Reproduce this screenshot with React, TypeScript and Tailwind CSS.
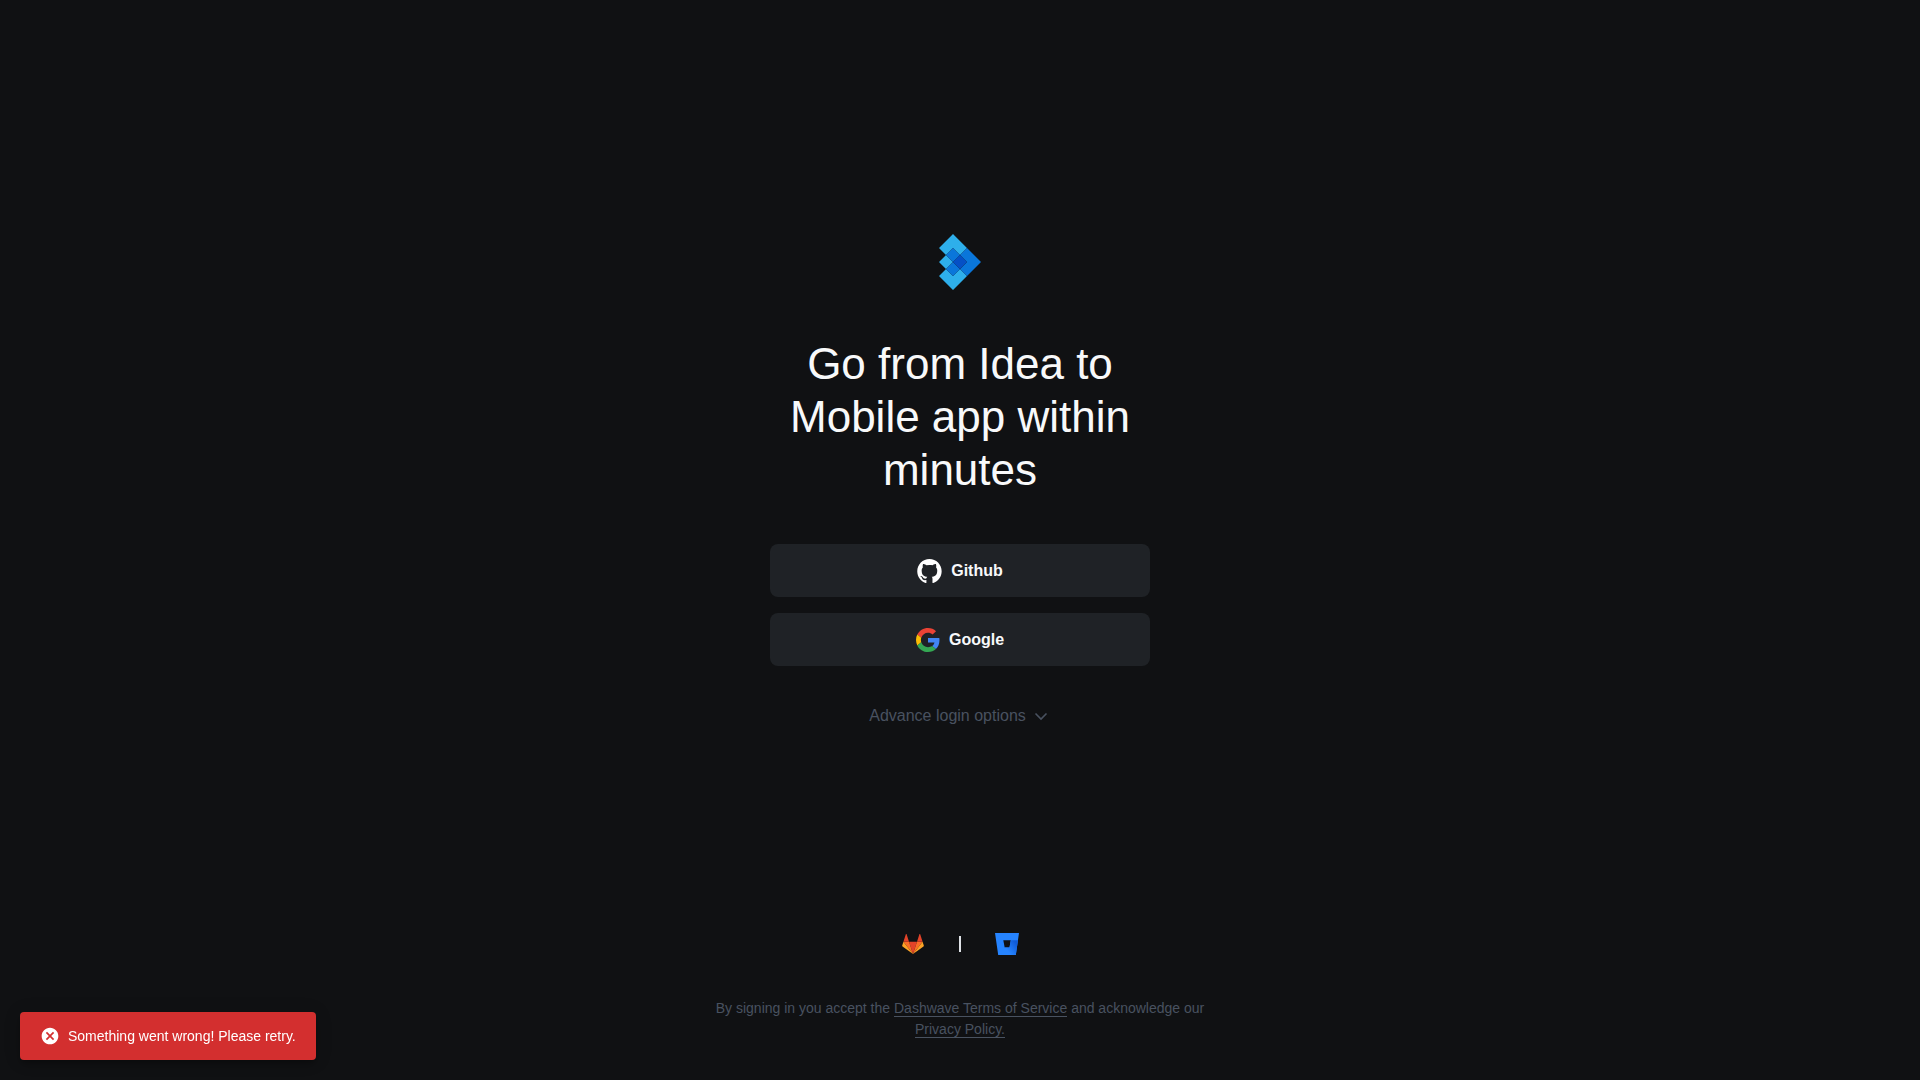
const loginOptions = [
  { name: "Github", Icon: GithubIcon },
  { name: "Google", Icon: GoogleIcon },
]

function DashwaveLogo() {
  return (
    <svg width="42" height="56" viewBox="0 0 6 8" aria-label="Dashwave">
      <path fill="#2eafeb" d="M2 0l2 2-1 1-1-1-1 1-1-1zM0 4l1-1 1 1-1 1zM2 8l2-2-1-1-1 1-1-1-1 1z" />
      <path fill="#0a76da" d="M2 2l1 1-1 1-1-1zM2 4l1 1-1 1-1-1zM4 2l2 2-2 2-1-1 1-1-1-1z" />
      <path fill="#0550c6" d="M3 3l1 1-1 1-1-1z" />
    </svg>
  )
}

function GithubIcon() {
  return (
    <svg width="25" height="24" viewBox="0 0 98 96" aria-hidden="true">
      <path
        fill="#fff"
        d="M48.854 0C21.839 0 0 22 0 49.217c0 21.756 13.993 40.172 33.405 46.69 2.427.49 3.316-1.059 3.316-2.362 0-1.141-.08-5.052-.08-9.127-13.59 2.934-16.42-5.867-16.42-5.867-2.184-5.704-5.42-7.17-5.42-7.17-4.448-3.015.324-3.015.324-3.015 4.934.326 7.523 5.052 7.523 5.052 4.367 7.496 11.404 5.378 14.235 4.074.404-3.178 1.699-5.378 3.074-6.6-10.839-1.141-22.243-5.378-22.243-24.283 0-5.378 1.94-9.778 5.014-13.2-.485-1.222-2.184-6.275.486-13.038 0 0 4.125-1.304 13.426 5.052a46.97 46.97 0 0 1 12.214-1.63c4.125 0 8.33.571 12.213 1.63 9.302-6.356 13.427-5.052 13.427-5.052 2.67 6.763.97 11.816.485 13.038 3.155 3.422 5.015 7.822 5.015 13.2 0 18.905-11.404 23.06-22.324 24.283 1.78 1.548 3.316 4.481 3.316 9.126 0 6.6-.08 11.897-.08 13.526 0 1.304.89 2.853 3.316 2.364 19.412-6.52 33.405-24.935 33.405-46.691C97.707 22 75.788 0 48.854 0z"
      />
    </svg>
  )
}

function GoogleIcon() {
  return (
    <svg width="24" height="24" viewBox="0 0 48 48" aria-hidden="true">
      <path fill="#EA4335" d="M24 9.5c3.54 0 6.71 1.22 9.21 3.6l6.85-6.85C35.9 2.38 30.47 0 24 0 14.62 0 6.51 5.38 2.56 13.22l7.98 6.19C12.43 13.72 17.74 9.5 24 9.5z" />
      <path fill="#4285F4" d="M46.98 24.55c0-1.57-.15-3.09-.38-4.55H24v9.02h12.94c-.58 2.96-2.26 5.48-4.78 7.18l7.73 6c4.51-4.18 7.09-10.36 7.09-17.65z" />
      <path fill="#FBBC05" d="M10.53 28.59c-.48-1.45-.76-2.99-.76-4.59s.27-3.14.76-4.59l-7.98-6.19C.92 16.46 0 20.12 0 24c0 3.88.92 7.54 2.56 10.78l7.97-6.19z" />
      <path fill="#34A853" d="M24 48c6.48 0 11.93-2.13 15.89-5.81l-7.73-6c-2.15 1.45-4.92 2.3-8.16 2.3-6.26 0-11.57-4.22-13.47-9.91l-7.98 6.19C6.51 42.62 14.62 48 24 48z" />
    </svg>
  )
}

function GitlabIcon() {
  return (
    <svg width="24" height="20" viewBox="0 0 256 236" aria-hidden="true">
      <path fill="#E24329" d="M128.075 236.075l47.104-144.97H80.97l47.104 144.97z" />
      <path fill="#FC6D26" d="M128.075 236.074L80.97 91.104H14.956l113.119 144.97z" />
      <path fill="#FCA326" d="M14.956 91.104L.642 135.16a9.752 9.752 0 0 0 3.542 10.903l123.891 90.012-113.12-144.97z" />
      <path fill="#E24329" d="M14.956 91.105H80.97L52.601 3.79c-1.46-4.493-7.816-4.492-9.275 0l-28.37 87.315z" />
      <path fill="#FC6D26" d="M128.075 236.074l47.104-144.97h66.015l-113.12 144.97z" />
      <path fill="#FCA326" d="M241.194 91.104l14.314 44.056a9.752 9.752 0 0 1-3.543 10.903l-123.89 90.012 113.119-144.97z" />
      <path fill="#E24329" d="M241.194 91.105h-66.015l28.37-87.315c1.46-4.493 7.816-4.492 9.275 0l28.37 87.315z" />
    </svg>
  )
}

function BitbucketIcon() {
  return (
    <svg width="24" height="22" viewBox="0 0 24 22" aria-hidden="true">
      <defs>
        <linearGradient id="bitbucket" x1="23" y1="8" x2="12" y2="17" gradientUnits="userSpaceOnUse">
          <stop offset="0.18" stopColor="#0F5BD8" />
          <stop offset="1" stopColor="#2684FF" />
        </linearGradient>
      </defs>
      <path fill="#2684FF" fillRule="evenodd" d="M0 0h24l-3.200 22H3.200zM8.300 7.200l1.400 7.400h4.800l1.300-7.400z" />
      <path fill="url(#bitbucket)" d="M22.950 7.200H15.800l-1.300 7.400H9.700L3.500 22h17.300z" />
    </svg>
  )
}

function ErrorToast({ message }: { message: string }) {
  return (
    <div
      role="alert"
      className="fixed bottom-5 left-5 flex h-12 items-center gap-2 rounded bg-[#d32f2f] px-5 text-sm text-white shadow-[0_3px_5px_-1px_rgba(0,0,0,0.2),0_6px_10px_0_rgba(0,0,0,0.14),0_1px_18px_0_rgba(0,0,0,0.12)]"
    >
      <svg width="20" height="20" viewBox="0 0 24 24" fill="currentColor" aria-hidden="true">
        <path
          fillRule="evenodd"
          d="M12 2C6.470 2 2 6.470 2 12s4.470 10 10 10 10-4.470 10-10S17.530 2 12 2zM15.590 7L12 10.590L8.410 7L7 8.410L10.590 12L7 15.590L8.410 17L12 13.410L15.590 17L17 15.590L13.410 12L17 8.410z"
        />
      </svg>
      {message}
    </div>
  )
}

export default function App() {
  return (
    <div className="flex min-h-screen flex-col bg-[#101113] font-['Liberation_Sans',Arial,sans-serif]">
      <main className="flex flex-1 flex-col items-center justify-center pt-[29px]">
        <DashwaveLogo />

        <h1 className="mt-[47px] w-full max-w-[380px] text-center text-[44px] leading-[53px] text-[#f8f9fa]">
          Go from Idea to Mobile app within minutes
        </h1>

        <div className="mt-12 flex w-full max-w-[380px] flex-col gap-4">
          {loginOptions.map(({ name, Icon }) => (
            <button
              key={name}
              type="button"
              className="flex h-[53px] items-center justify-center gap-[9px] rounded-lg bg-[#1f2226] font-bold text-[#f8f9fa]"
            >
              <Icon />
              {name}
            </button>
          ))}
        </div>

        <button type="button" className="mt-[38px] flex h-6 items-center gap-2 text-[#495260]">
          Advance login options
          <svg width="17" height="18" viewBox="0 0 17 18" fill="none" stroke="currentColor" strokeWidth="1.6" aria-hidden="true">
            <path d="M1.500 6.500L7 12l5.500-5.500" />
          </svg>
        </button>
      </main>

      <footer className="flex flex-col items-center px-5 pb-10">
        <div className="flex items-center justify-center gap-[34px]">
          <a href="#gitlab" aria-label="GitLab">
            <GitlabIcon />
          </a>
          <span className="h-4 w-0.5 bg-[#dee2e6]" />
          <a href="#bitbucket" aria-label="Bitbucket">
            <BitbucketIcon />
          </a>
        </div>

        <p className="mt-[43px] max-w-[500px] text-center text-sm leading-[21px] text-[#495260]">
          By signing in you accept the{" "}
          <a href="#terms" className="border-b border-[#495260]">Dashwave Terms of Service</a>{" "}
          and acknowledge our{" "}
          <a href="#privacy" className="border-b border-[#495260]">Privacy Policy.</a>
        </p>
      </footer>

      <ErrorToast message="Something went wrong! Please retry." />
    </div>
  )
}
